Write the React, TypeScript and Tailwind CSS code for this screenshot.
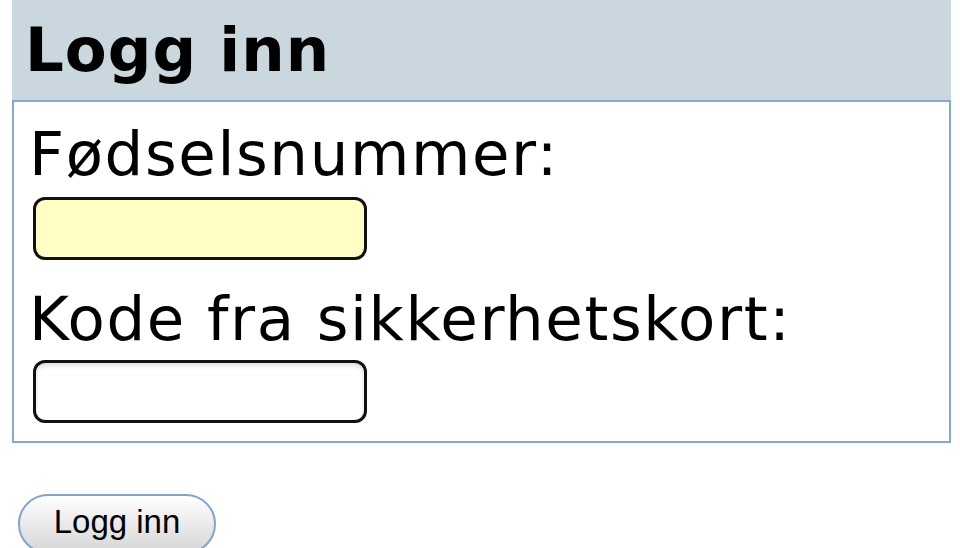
export default function App() {
  return (
    <div className="min-h-screen bg-white pl-3 font-['DejaVu_Sans',sans-serif] text-black">
      <div className="w-[939px]">
        <h1 className="h-[100px] bg-[#cad7de] pl-[13px] text-[61px] font-bold leading-[100px] tracking-[1px]">
          Logg inn
        </h1>

        <div className="border-2 border-[#86a7cf] pt-[17px] pb-[18px]">
          <label className="block pl-[15px] text-[61px] leading-[70px] tracking-[1.6px]">Fødselsnummer:</label>
          <input
            type="text"
            className="mt-2 ml-[19px] block h-[63px] w-[334px] rounded-[12px] border-[3px] border-[#111] bg-[#ffffc6] outline-none"
          />

          <label className="mt-6 block pl-[15px] text-[61px] leading-[70px] tracking-[1.6px]">Kode fra sikkerhetskort:</label>
          <input
            type="password"
            className="mt-1.5 ml-[19px] block h-[63px] w-[334px] rounded-[12px] border-[3px] border-[#111] bg-white shadow-[inset_0_3px_4px_rgba(0,0,0,0.12)] outline-none"
          />
        </div>
      </div>

      <button className="mt-[51px] ml-[6px] h-[60px] w-[198px] rounded-full border-2 border-[#82a5cd] bg-gradient-to-b from-white to-[#d6d6d6] pb-[4px] font-['Liberation_Sans',sans-serif] text-[33px]">
        Logg inn
      </button>
    </div>
  );
}
